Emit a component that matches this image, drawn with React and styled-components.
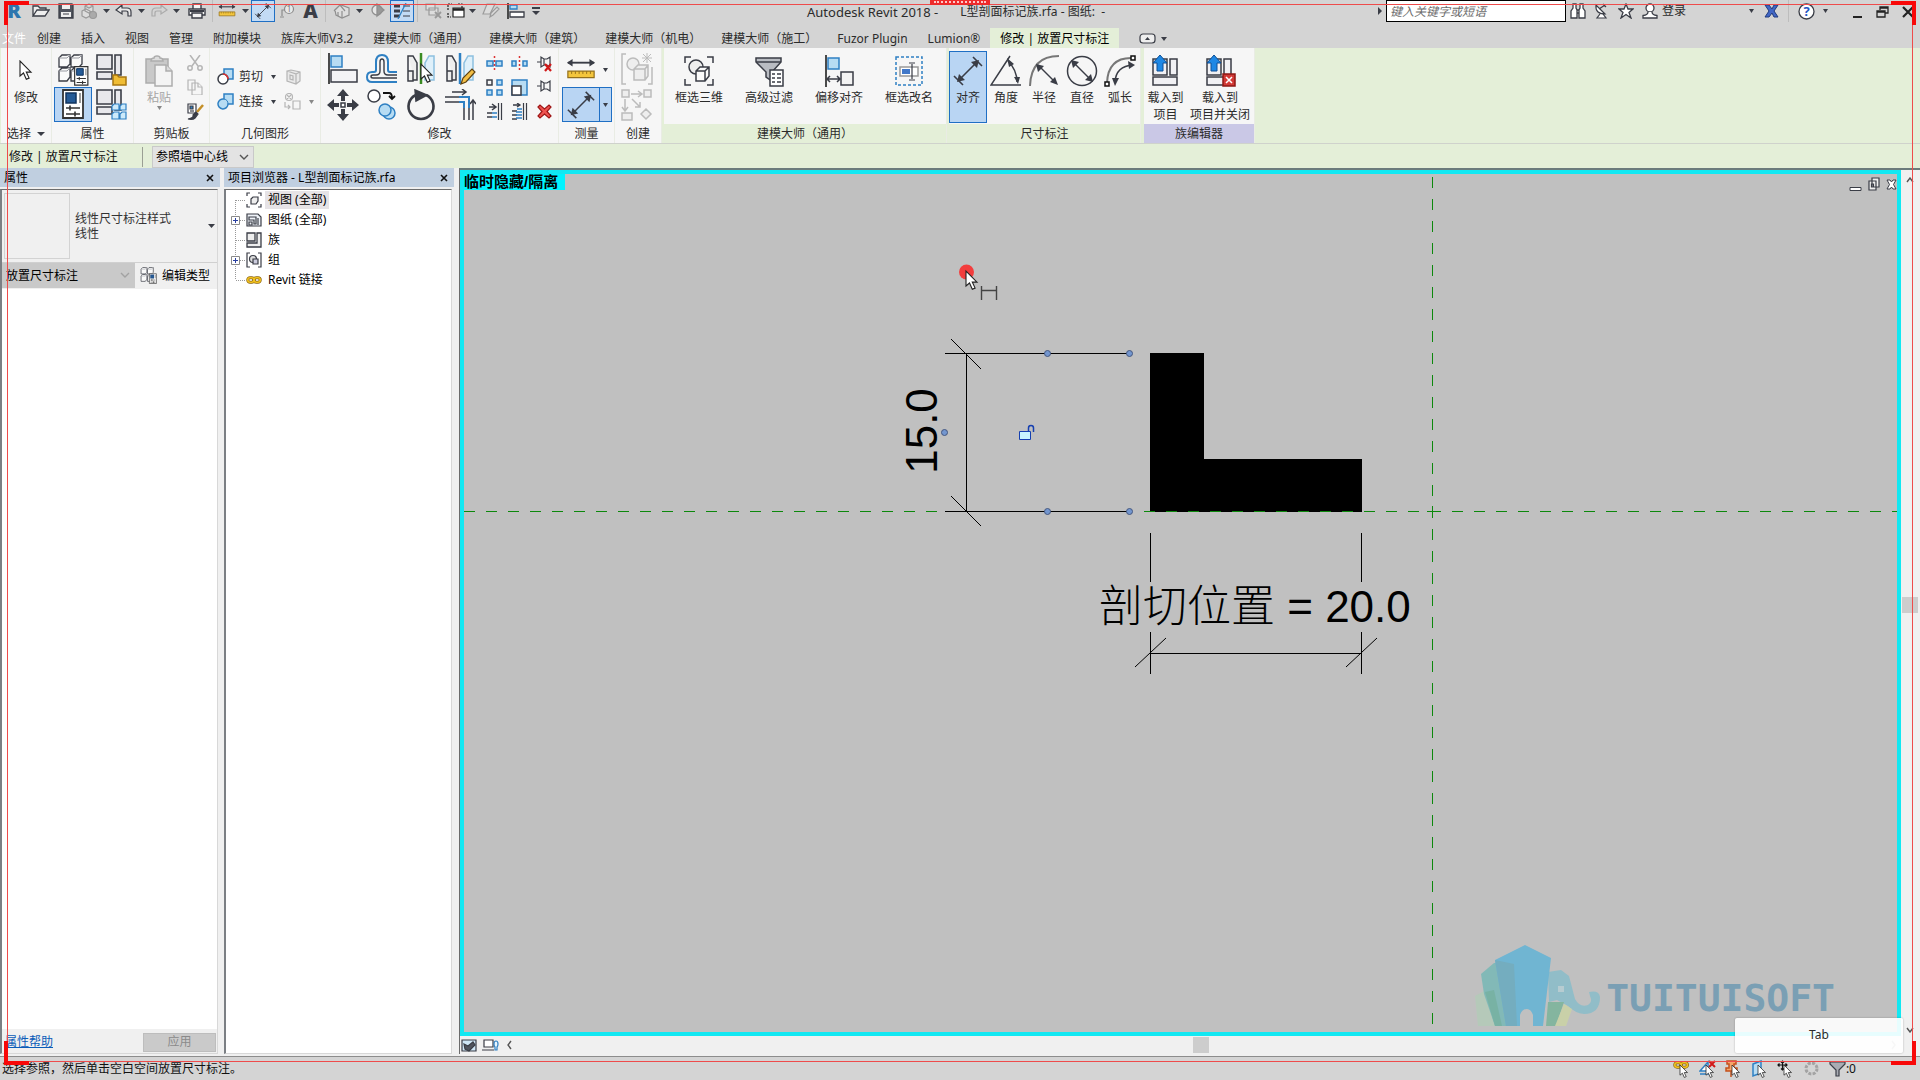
import React from 'react'
import styled, {createGlobalStyle, css} from 'styled-components'

const GlobalStyle = createGlobalStyle`
    *{
        box-sizing:border-box;
    }
    body{
        margin:0;
        overflow:hidden;
        background:#f0f0f0;
        color:#2b2b2b;
        font-family:"Noto Sans", "Noto Sans CJK SC", sans-serif;
        font-size:12px;
        line-height:16px;
    }
    button, input, select{
        font:inherit;
        color:inherit;
        margin:0;
        padding:0;
        border:0;
        background:none;
        border-radius:0;
    }
    svg{
        display:block;
        flex:none;
    }
`

const Window = styled.div`
    position:relative;
    display:flex;
    flex-direction:column;
    height:100vh;
`

/* ---------- title bar ---------- */

const TitleBar = styled.header`
    display:flex;
    align-items:flex-start;
    height:28px;
    background:#d4d4d4;
`

const QuickButton = styled.button`
    display:flex;
    align-items:center;
    justify-content:${p => p.$left ? 'flex-start' : 'center'};
    width:${p => p.$w}px;
    height:22px;
    ${p => p.$active && css`
        background:#c3dbf5;
        border:1px solid #1f6fc4;
    `}
`

const Toolbar = styled.div`
    display:flex;
    margin-right:${p => p.$gap || 0}px;
`

const Split = styled.span`
    width:${p => p.$w}px;
    height:22px;
    display:flex;
    justify-content:center;

    &::before{
        content:'';
        width:1px;
        background:#bdbdbd;
    }
`

const Title = styled.h1`
    flex:1;
    display:flex;
    justify-content:center;
    gap:22px;
    margin:0;
    padding-right:6px;
    font-size:12px;
    font-weight:400;
    line-height:24px;
    white-space:pre;
`

const AppName = styled.span`
    font-size:13px;
`

const SearchInput = styled.input`
    width:180px;
    height:22px;
    padding:0 3px;
    border:1px solid #000;
    background:#fff;
    font-style:italic;
    line-height:20px;

    &::placeholder{
        color:#6b6b6b;
        opacity:1;
    }
`

const WindowButton = styled.button`
    display:flex;
    align-items:center;
    justify-content:center;
    width:25px;
    height:24px;
`

/* ---------- tabs ---------- */

const Tabs = styled.nav`
    display:flex;
    height:20px;
    background:#d4d4d4;
    white-space:nowrap;
`

const Tab = styled.button`
    padding:1px 10px 0;
    line-height:20px;
    ${p => p.$file && css`
        padding:1px 1px 0 2px;
        color:#fff;
    `}
    ${p => p.$active && css`
        background:#e4efd8;
        color:#000;
    `}
`

/* ---------- ribbon ---------- */

const Ribbon = styled.div`
    display:flex;
    height:96px;
    padding-left:1px;
    background:#e4efd8;
    border-bottom:1px solid #cfd2cc;
`

const Panel = styled.section`
    display:flex;
    flex-direction:column;
    width:${p => p.$w}px;
    margin-right:${p => p.$gap || 0}px;
    background:#f6f6f6;
    border-right:1px solid #e9ece4;
`

const PanelBody = styled.div`
    flex:1;
    display:flex;
    padding:${p => p.$pad || '3px 0 0'};
    gap:${p => p.$gap || 0}px;
`

const PanelLabel = styled.h2`
    display:flex;
    align-items:center;
    justify-content:center;
    gap:6px;
    height:19px;
    margin:0;
    font-size:12px;
    font-weight:400;
    background:${p => p.$bg || 'transparent'};
`

const BigButton = styled.button`
    display:flex;
    flex-direction:column;
    align-items:center;
    width:${p => p.$w || 38}px;
    height:72px;
    padding-top:2px;
    line-height:17px;
    white-space:pre;
    color:${p => p.disabled ? '#a5a5a5' : '#2b2b2b'};
    ${p => p.$active && css`
        background:#b9d5f3;
        box-shadow:inset 0 0 0 1px #1f6fc4;
    `}
`

const IconBox = styled.span`
    display:flex;
    align-items:center;
    justify-content:center;
    width:32px;
    height:36px;
`

const IconGrid = styled.div`
    display:grid;
    grid-template-columns:repeat(${p => p.$cols}, ${p => p.$cell}px);
    grid-auto-rows:${p => p.$row}px;
    align-content:start;
`

const IconButton = styled.button`
    display:flex;
    align-items:center;
    justify-content:center;
    ${p => p.$active && css`
        background:#b9d5f3;
        border:1px solid #1f6fc4;
    `}
`

const TextButton = styled.button`
    display:flex;
    align-items:center;
    gap:5px;
    height:25px;

    & svg + svg{
        margin-left:3px;
    }
`

const GeometryGrid = styled.div`
    display:grid;
    grid-template-columns:64px 24px 12px;
    grid-auto-rows:25px;
    align-content:start;
    align-items:center;
`

const SplitButton = styled.div`
    display:flex;
    height:35px;
    width:50px;

    & button:first-child{
        width:38px;
    }
    & button:last-child{
        width:13px;
        margin-left:-1px;
    }
`

/* ---------- options bar ---------- */

const OptionsBar = styled.div`
    display:flex;
    align-items:center;
    height:24px;
    padding:2px 0 0 9px;
    background:#e4efd8;
    color:#111;
`

const OptionsTitle = styled.span`
    width:134px;
    height:20px;
    line-height:20px;
    margin-right:9px;
    border-right:1px solid #9a9f94;
`

const SelectBox = styled.div`
    display:grid;
    align-items:center;
    width:${p => p.$w}px;
    height:${p => p.$h}px;
    background:${p => p.$bg};
    border:1px solid ${p => p.$line};

    & select{
        grid-area:1 / 1;
        width:100%;
        height:100%;
        appearance:none;
        padding-left:3px;
        color:#000;
        opacity:1;
    }
    & svg{
        grid-area:1 / 1;
        justify-self:end;
        margin-right:4px;
        pointer-events:none;
    }
`

/* ---------- docked panels ---------- */

const Workspace = styled.main`
    flex:1;
    display:flex;
    min-height:0;
    border-bottom:1px solid #8c8c8c;
    padding-bottom:2px;
`

const Dock = styled.aside`
    display:flex;
    flex-direction:column;
    flex:none;
    width:${p => p.$w}px;
    margin-right:${p => p.$gap}px;
    color:#000;
`

const DockTitle = styled.div`
    display:flex;
    align-items:center;
    justify-content:space-between;
    height:19px;
    padding:0 6px 0 4px;
    background:#c0cfe0;
    margin-bottom:2px;
`

const DockBody = styled.div`
    flex:1;
    display:flex;
    flex-direction:column;
    margin-right:2px;
    border:1px solid #d8d8d8;
    border-top:1px solid #6d6d6d;
    border-left:2px solid #7b7f84;
    background:#fff;
`

const TypeSelector = styled.button`
    display:flex;
    align-items:center;
    height:73px;
    padding:0 2px;
    gap:5px;
    background:#f0f0f0;
    border-bottom:1px solid #d0d0d0;
    text-align:left;
    line-height:15px;
    color:#333;
`

const Preview = styled.span`
    width:66px;
    height:66px;
    border:1px solid #d3d3d3;
`

const TypeText = styled.span`
    flex:1;
`

const TypeRow = styled.div`
    display:flex;
    gap:5px;
    height:26px;
    background:#f0f0f0;
`

const PropsFooter = styled.div`
    display:flex;
    align-items:center;
    justify-content:space-between;
    height:24px;
    margin-top:auto;
    padding:2px 1px 0 3px;
    background:#f0f0f0;

    & a{
        color:#0a5cb8;
    }
`

const ApplyButton = styled.button`
    width:73px;
    height:19px;
    background:#cacaca;
    border:1px solid #bdbdbd;
    color:#8a8a8a;
`

const Tree = styled.ul`
    list-style:none;
    margin:0;
    padding:0 0 0 3px;
`

const TreeItem = styled.li`
    display:flex;
    align-items:center;
    height:20px;

    & > span{
        padding:0 3px;
        margin-left:3px;
        line-height:18px;
        background:${p => p.$selected ? '#e6e3e6' : 'transparent'};
    }
`

/* ---------- drawing view ---------- */

const View = styled.section`
    flex:1;
    display:grid;
    grid-template-columns:1fr 19px;
    grid-template-rows:1fr 18px;
    border-top:2px solid #6b7b7b;
    border-left:1px solid #6b6b6b;
    min-width:0;
`

const Canvas = styled.div`
    position:relative;
    border:4px solid #12e8f2;
    background:#c0c0c0;
    overflow:hidden;
`

const IsolateTag = styled.div`
    position:absolute;
    left:0;
    top:0;
    width:101px;
    height:16px;
    line-height:15px;
    color:#000;
    font-size:15px;
    font-weight:700;
    font-family:"Liberation Sans", "Noto Sans CJK SC", sans-serif;
    white-space:nowrap;
    background:#00f4ff;
`

const ViewButtons = styled.div`
    position:absolute;
    right:0;
    top:3px;
    display:flex;
    gap:6px;
`

const Watermark = styled.div`
    position:absolute;
    right:62px;
    bottom:5px;
    display:flex;
    align-items:flex-end;
    gap:3px;
    color:#7a9fb4;
    font:700 38px/58px "DejaVu Sans Mono", monospace;
`

const VScroll = styled.div`
    display:flex;
    flex-direction:column;
    align-items:center;
    justify-content:space-between;
    padding:7px 2px 3px 0;
    background:#f0f0f0;
`

const HScroll = styled.div`
    display:flex;
    align-items:center;
    gap:5px;
    padding:0 4px 0 1px;
    background:#f0f0f0;
`

const Track = styled.div`
    flex:1;
    display:flex;
    justify-content:center;
    padding-right:12px;
`

const Thumb = styled.span`
    width:16px;
    height:16px;
    background:#cdcdcd;
`

const KeyHint = styled.div`
    position:absolute;
    right:17px;
    bottom:27px;
    width:168px;
    height:35px;
    line-height:34px;
    text-align:center;
    border-radius:2px;
    background:rgba(255,255,255,.9);
    box-shadow:0 0 2px rgba(0,0,0,.3);
`

/* ---------- status bar ---------- */

const StatusBar = styled.footer`
    display:flex;
    align-items:center;
    justify-content:space-between;
    height:23px;
    padding:0 64px 0 2px;
    background:#d4d4d4;
    color:#111;
`

const StatusTools = styled.div`
    display:flex;
    align-items:center;
    gap:9px;
`

const StatusButton = styled.button`
    display:flex;
    align-items:center;
    height:18px;
`

/* ---------- recorder frame ---------- */

const Frame = styled.div`
    position:absolute;
    inset:4px 7px 18px 7px;
    border:1px solid #ee4b4b;
    pointer-events:none;
`

const Corner = styled.span`
    position:absolute;
    width:25px;
    height:24px;
    border:0 solid #f80808;
    ${p => p.$v}:-4px;
    ${p => p.$h}:-4px;
    border-${p => p.$v}-width:4px;
    border-${p => p.$h}-width:4px;
`

const Handle = styled.span`
    position:absolute;
    left:50%;
    top:-5px;
    width:60px;
    height:5px;
    margin-left:-30px;
    background:#ee2b2b;

    &::after{
        content:'';
        display:block;
        margin:1px 4px;
        border-top:2px dotted #ffc8c8;
    }
`

/* ---------- icons ---------- */

const D = '#3a3d46'
const B = '#2f80c3'
const L = '#b7dcf3'
const G = '#b5b5b5'

const Icon = ({w = 32, h, stroke = D, fill = 'none', sw = 1.5, children}) => (
    <svg width={w} height={h || w} viewBox={`0 0 ${w} ${h || w}`} fill={fill} stroke={stroke} strokeWidth={sw} aria-hidden="true">{children}</svg>
)

const Glyph = styled.span`
    font-family:"Open Sans", "Noto Sans", sans-serif;
    font-size:${p => p.$size}px;
    font-weight:800;
    line-height:20px;
    color:${p => p.$color};
`

const Caret = ({c = D, s = 7}) => <Icon w={s} h={4} stroke="none"><path d={`M0 0H${s}L${s / 2} 4z`} fill={c}/></Icon>
const Chevron = ({d = 'M1 1l4 4 4-4', c = '#555', w = 10, h = 7}) => <Icon w={w} h={h} stroke={c} sw={1.4}><path d={d}/></Icon>
const Cross = ({s = 9, c = '#111', sw = 1.6}) => <Icon w={s} stroke={c} sw={sw}><path d={`M1 1L${s - 1} ${s - 1}M${s - 1} 1L1 ${s - 1}`}/></Icon>
const Pointer = ({x = 0, y = 0, k = 1, fill = '#fff'}) => <path transform={`translate(${x} ${y}) scale(${k})`} d="M0 0v15l3.5-3 2.8 6.3 2.8-1.2-2.8-6H11z" fill={fill} stroke="#222" strokeWidth="1.1"/>

const RevitLogo = () => <Glyph $size={20} $color="#2d76ae">R</Glyph>
const OpenIcon = () => <Icon w={18} h={14} sw={1.3} fill="#eee"><path d="M1 12V2h5l2 2h6v2M1 12L5 6h12l-4 6z"/></Icon>
const SaveIcon = () => <Icon w={16} sw={1.3}><path d="M1 1h13l1 1v13H1z" fill="#50545e"/><path d="M4 1h8v5H4zM3 9h10v5H3z" fill="#eee" stroke="none"/><path d="M5 11h6" strokeWidth="1"/></Icon>
const SyncIcon = () => <Icon w={17} stroke="#999" sw={1.2} fill="#ddd"><path d="M4 3l4-2 4 2v5l-4 2-4-2zM1 8l4-2 4 2v5l-4 2-4-2zM4 3l4 2 4-2"/><circle cx="12" cy="12" r="3.500" fill="#aaa"/></Icon>
const UndoIcon = () => <Icon w={18} h={14} sw={1.2} fill="#e8e8e8"><path d="M1 6l6-5v3h5q4 0 4 4v4h-3V9q0-2-2-2H7v3z"/></Icon>
const RedoIcon = () => <Icon w={18} h={14} stroke="#aaa" sw={1.2}><path d="M17 6l-6-5v3H6q-4 0-4 4v4h3V9q0-2 2-2h4v3z"/></Icon>
const PrintIcon = () => <Icon w={18} h={16} sw={1.4} fill="#f4f4f4"><path d="M5 6V1h8v5"/><path d="M1 6h16v6H1z"/><path d="M2 8h14" strokeWidth="2"/><path d="M4 10h10v5H4z"/></Icon>
const MeasureIcon = ({w = 32}) => (
    <svg width={w} height={w * 24 / 32} viewBox="0 0 32 24" fill="none" stroke={D} strokeWidth="2" aria-hidden="true">
        <path d="M2 5h28"/><path d="M1 5l6-4v8zM31 5l-6-4v8z" fill={D} stroke="none"/>
        <path d="M2 14h28v7H2z" fill="#f4c63d" stroke="#94701b" strokeWidth="1.300"/>
        <path d="M6 14v3M10 14v3M14 14v3M18 14v3M22 14v3M26 14v3" stroke="#94701b" strokeWidth="1"/>
    </svg>
)
const DimIcon = ({w = 32}) => (
    <svg width={w} height={w} viewBox="0 0 32 32" fill="none" stroke={D} strokeWidth="1.600" aria-hidden="true">
        <path d="M7 25L25 7M2 21l9 9M21 2l9 9"/>
        <path d="M5 27l2-8 6 6zM27 5l-8 2 6 6z" fill={D} stroke="none"/>
    </svg>
)
const TagIcon = () => (
    <Icon w={16} stroke="#8b8b8b" sw={1.2}>
        <circle cx="10" cy="6" r="4.500" fill="#e9e9e9"/><path d="M6 7H3v6M1 14h4"/>
        <text x="10" y="9" textAnchor="middle" fontSize="8" fill="#777" stroke="none">1</text>
    </Icon>
)
const LetterA = () => <Glyph $size={20} $color={D}>A</Glyph>
const HomeIcon = () => <Icon w={18} h={16} stroke="#8f8f8f" sw={1.2} fill="#dedede"><path d="M2 7l6-5 8 3v7l-7 3-6-3z"/><path d="M1 8l6-6 5 6M9 8v7M5 9v4"/></Icon>
const SectionIcon = () => <Icon w={14} h={16} stroke="#8f8f8f" sw={1.3} fill="#e5e5e5"><circle cx="6" cy="7" r="5"/><path d="M6 1l7 6-7 6z" fill="#999"/></Icon>
const ThinLines = () => <Icon w={18} h={16}><path d="M1 3h6M1 8h6M1 13h6" strokeWidth="3"/><path d="M10 3h7M10 8h7M10 13h7" strokeWidth="1"/><path d="M13 0L5 16" stroke={B} strokeWidth="1.300"/></Icon>
const CloseHidden = () => <Icon w={17} stroke="#999" sw={1.2}><path d="M1 1h9v6H1zM4 5h9v7H4z" fill="#ddd"/><path d="M10 9l6 6M16 9l-6 6" strokeWidth="1.800"/></Icon>
const SwitchWin = () => <Icon w={18} h={16} sw={1.2} stroke="#222" fill="#fff"><path d="M1 7V1h4M15 5V1h-4M1 10v4h3" fill="none" strokeDasharray="2 1"/><path d="M6 5h11v9H6z"/><path d="M6 6.500h11" strokeWidth="2.500"/></Icon>
const SketchIcon = () => <Icon w={18} h={16} stroke="#9b9b9b" sw={1.2}><path d="M5 1h8L8 11H1zM8 14l1-4 6-6 2 2-6 6z" fill="#dcdcdc"/></Icon>
const AlignMini = () => <Icon w={18} h={16} sw={1.3}><path d="M1 0v16" stroke="#000"/><path d="M3 2h7v4H3z" fill={L} stroke={B}/><path d="M3 9h14v5H3z" fill="#fff"/></Icon>
const MenuCaret = () => <Icon w={8} h={8} stroke="none" fill={D}><path d="M0 0h8v2H0zM0 4h8L4 8z"/></Icon>

const quickTools = [
    ['Revit', 28, RevitLogo], ['打开', 26, OpenIcon], ['保存', 23, SaveIcon], ['同步', 24, SyncIcon], ['同步选项', 11, Caret],
    ['放弃', 23, UndoIcon], ['放弃列表', 13, Caret], ['重做', 22, RedoIcon], ['重做列表', 13, Caret], ['打印', 27, PrintIcon], ['', 4],
    ['测量', 26, () => <MeasureIcon w={18}/>], ['测量选项', 11, Caret], ['对齐尺寸标注', 24, () => <DimIcon w={18}/>, true],
    ['按类别标记', 24, TagIcon], ['文字', 23, LetterA], ['', 7], ['默认三维视图', 25, HomeIcon], ['三维选项', 11, Caret],
    ['剖面', 25, SectionIcon], ['细线', 24, ThinLines, true], ['', 7], ['关闭隐藏窗口', 24, CloseHidden], ['切换窗口', 22, SwitchWin],
    ['窗口列表', 11, Caret], ['编辑草图', 26, SketchIcon], ['对齐', 24, AlignMini], ['自定义快速访问工具栏', 16, MenuCaret]
]

const Binoculars = () => <Icon w={16} sw={1.3} fill="#fff"><path d="M3 1h3v4l1 2v8H1V8l2-3zM10 1h3v4l2 3v7H9V7l1-2zM7 7h2v3H7z"/></Icon>
const Satellite = () => <Icon w={15} h={16} sw={1.2} fill="#fff"><path d="M2 2q-1 9 9 9zM5 6l6-4M6 11l-3 4h9l-3-4M9 1l3 3"/></Icon>
const Star = () => <Icon w={16} sw={1.3} fill="#fff"><path d="M8 1l2 5h5l-4 3.500 2 5.500-5-3.500L3 15l2-5.500L1 6h5z"/></Icon>
const UserIcon = () => <Icon w={16} sw={1.3} fill="#fff"><circle cx="8" cy="5" r="4"/><path d="M6 9q0 3-5 3.500V15h14v-2.500Q10 12 10 9"/></Icon>
const ExchangeIcon = () => <Icon w={15} h={14} stroke="#203a7d" sw={1} fill="#4267c6"><path d="M1 1h4l3 4 2-4h4l-4 6 4 6h-4L8 9l-3 4H1l4-6z"/></Icon>
const HelpIcon = () => (
    <Icon w={17} sw={1.3}>
        <circle cx="8.500" cy="8.500" r="7.500" fill="#fff"/>
        <text x="8.500" y="13" textAnchor="middle" fontSize="13" fontWeight="700" fill="#2456c4" stroke="none">?</text>
    </Icon>
)

const accountTools = [
    ['搜索', 24, Binoculars], ['通信中心', 23, Satellite], ['收藏夹', 25, Star], ['用户', 24, UserIcon], ['登录', 82, () => '登录'],
    ['登录选项', 14, () => <Caret s={5}/>], ['应用程序商店', 26, ExchangeIcon], ['', 9], ['帮助', 27, HelpIcon], ['帮助选项', 10, () => <Caret s={5}/>]
]

/* ribbon pictures */

const Cubes = () => (
    <g fill="#fafafa" stroke={D} strokeWidth="1.300">
        <path d="M2 4l3-3h8v9l-3 3H2zM14 4l3-3h8v9l-3 3h-8zM2 17l3-3h8v9l-3 4H2zM14 17l3-3h8v9l-3 4h-8z"/>
        <path d="M2 4h8l3-3M14 4h8l3-3M2 17h8l3-3M14 17h8l3-3" stroke="#9a9ca3" strokeWidth="1"/>
    </g>
)
const PropSheet = ({x = 0, y = 0, k = 1}) => (
    <g transform={`translate(${x} ${y}) scale(${k})`}>
        <path d="M1 1h20v28H1z" fill="#fff" stroke="#333" strokeWidth="1.800"/>
        <path d="M4 4h10v10H4z" fill="#245a96" stroke="#12355f"/>
        <path d="M17 4h2v10h-2z" fill="#999" stroke="none"/>
        <path d="M4 19h14M4 25h14M8 16.500v5M13 22.500v5" stroke="#333" strokeWidth="1.600"/>
    </g>
)
const Blocks = () => <g fill="#e8e8ec" strokeWidth="1.600"><path d="M2 1h15v14H2zM20 1h6v20h-6zM2 18h15v7H2z"/></g>
const TypeProps = () => <Icon><Cubes/><PropSheet x={17} y={12} k={0.66}/></Icon>
const FamilyTypes = () => <Icon><Blocks/><path d="M18 21h4l2 2h7v8H18z" fill="#f0bd35" stroke="#a87710"/></Icon>
const PropsIcon = () => <Icon w={24} h={31}><PropSheet x={1}/></Icon>
const FamilyCat = () => <Icon><Blocks/><g fill="#cdeafa" stroke={B} strokeWidth="1.200"><path d="M17 17l2-2h5v6h-7zM25 17l2-2h4v6h-6zM17 25l2-2h5v7h-7zM25 25l2-2h4v7h-6z"/></g></Icon>
const PasteIcon = () => <Icon w={28} h={32} stroke="#adadad" fill="#ddd"><path d="M1 4h22v24H1z" fill="#c9c9c9"/><path d="M6 6q0-3 3-3 0-2 3-2t3 2q3 0 3 3z"/><path d="M10 10h11l6 6v15H10z" fill="#f4f4f4"/><path d="M21 10v6h6"/></Icon>
const CutIcon = () => <Icon w={16} stroke={G}><path d="M3 0l8 11M13 0L5 11"/><circle cx="3" cy="13" r="2.200"/><circle cx="13" cy="13" r="2.200"/></Icon>
const CopyIcon = () => <Icon w={16} stroke={G} fill="#f6f6f6" sw={1.200}><path d="M1 1h7v10H1zM5 4h6l4 4v8H5z"/><path d="M11 4v4h4"/></Icon>
const MatchIcon = () => <Icon w={17} sw={1.200}><path d="M1 1h8v9H1z" fill="#fff"/><path d="M3 3h3v3H3z" fill={B}/><path d="M3 8h4"/><path d="M16 2l-6 7" stroke="#c48f27" strokeWidth="2.500"/><path d="M1 16q6-1 5-4l3-3 2 2-3 4q-2 2-7 1z" fill={D}/></Icon>
const CutGeo = () => <Icon w={17}><path d="M7 1h9v10H7z" fill={L} stroke={B}/><circle cx="6" cy="11" r="5" fill="#fff"/><path d="M6 6a5 5 0 0 1 5 5" stroke="#d33"/></Icon>
const JoinGeo = () => <Icon w={17} stroke={B} fill={L}><path d="M7 1h9v10h-5a5 5 0 1 1-4-5z"/><path d="M7 6a5 5 0 0 1 4 5" strokeWidth="1"/></Icon>
const GeoA = () => <Icon w={16} stroke={G} fill="#e9e9e9" sw={1.200}><path d="M2 2l4-1 9 2v9l-4 3-9-3zM2 2l9 3v10M11 5l4-2"/><path d="M5 6l3 1v4l-3-1z"/></Icon>
const GeoB = () => <Icon w={18} stroke={G} sw={1.200}><circle cx="5" cy="4" r="3.500"/><path d="M3 2l4 4M7 2L3 6M1 9v5h5M4 12l2 2-2 2M9 8h7v8H9z"/></Icon>

const AlignIcon = () => <Icon><path d="M2 0v31" stroke="#111"/><path d="M4 3h11v11H4z" fill={L} stroke={B}/><path d="M4 17h26v12H4z" fill="#f3f3f6"/></Icon>
const OffsetIcon = () => (
    <Icon sw={2}>
        <path d="M31 29H6q-5 0-5-5t5-5h2q2 0 2-2v-8q0-7 6-7t6 7v8q0 2 2 2h7" stroke={B}/>
        <path d="M31 25H7q-2 0-2-1.500T7 22h3q4 0 4-4V9q0-3 2-3t2 3v9q0 4 4 4h9" strokeWidth="1.400"/>
    </Icon>
)
const MirrorBase = ({line}) => <g><path d="M3 3h5l4 7v17h-4V18H3zM3 3v25h5v-9" fill="#eee"/><path d="M29 3h-5l-4 7v17h9z" fill="#dff0fa" stroke="#8dc0e0"/><path d="M16 0v31" stroke={line} strokeWidth="2.500"/></g>
const MirrorPick = () => <Icon><MirrorBase line="#3a8b22"/><Pointer x={16} y={11}/></Icon>
const MirrorDraw = () => <Icon><MirrorBase line={B}/><path d="M17 31l2-6 9-9 3 3-9 10z" fill="#f3bf45" stroke="#5f4211" strokeWidth="1.200"/></Icon>
const MoveIcon = () => <Icon stroke="none" fill={D}><path d="M16 0l6 7h-4v5h-4V7h-4zM16 32l6-7h-4v-5h-4v5h-4zM0 16l7-6v4h5v4H7v4zM32 16l-7-6v4h-5v4h5v4z"/><path d="M14 14h4v4h-4z" fill="#fff" stroke={D}/></Icon>
const CopyTool = () => <Icon><circle cx="8" cy="7" r="6" fill="#fff"/><path d="M17 4h6q3 0 3 5M23 7l3 3 3-3" stroke="#111" strokeWidth="1.800"/><g fill={L} stroke={B}><circle cx="23" cy="24" r="6"/><circle cx="19" cy="21" r="6"/></g></Icon>
const RotateIcon = () => <Icon><path d="M21 6a12.500 12.500 0 1 1-10 0" strokeWidth="2.600"/><path d="M10 1l12 5-11 6z" fill={D}/></Icon>
const TrimIcon = () => <Icon><path d="M8 3h13M18 0l4 3-4 3M29 31V12M26 15l3-4 3 4"/><path d="M1 8h14M1 13h14M20 19v12M25 19v12"/><path d="M15 8h10v11M15 13h5v6" stroke={B} strokeWidth="2"/></Icon>
const SplitEl = ({gap}) => <Icon w={17} stroke={B} fill={L}><path d={gap ? 'M1 6h4v5H1zM12 6h4v5h-4z' : 'M1 6h6v5H1zM10 6h6v5h-6z'}/><path d="M8.500 1v15" stroke="#d33" strokeDasharray="2 2"/></Icon>
const PinIcon = ({x}) => <Icon w={17} sw={1.200}><path d="M1 7h4M5 2v10l3-2h3l3 2V2l-3 2H8zM8 4v6"/>{x && <path d="M9 9l6 7M15 9l-6 7" stroke="#d01818" strokeWidth="2.200"/>}</Icon>
const ArrayIcon = () => <Icon w={17}><path d="M1 1h5v5H1z"/><path d="M1 11h5v5H1zM11 1h5v5h-5zM11 11h5v5h-5z" fill={L} stroke={B}/></Icon>
const ScaleIcon = () => <Icon w={17} fill={L} stroke={B}><path d="M1 1h15v15H1z"/><path d="M1 7h9v9H1z" fill="#fff" stroke={D}/></Icon>
const TrimOne = () => <Icon w={17}><path d="M3 4h6M6 1l4 3-4 3"/><path d="M1 10h5M1 14h5"/><path d="M6 10h5M6 14h5" stroke={B}/><path d="M12.500 0v17M15.500 0v17" strokeWidth="1.200"/></Icon>
const TrimMany = () => <Icon w={17}><path d="M2 2h7M6 0l3 2-3 2M1 8h5M1 12h5M1 16h5" strokeWidth="1.300"/><path d="M6 6h5M5 9h6M5 12h6M5 15h6" stroke={B} strokeWidth="1.600"/><path d="M12.500 0v17M15.500 0v17" strokeWidth="1.200"/></Icon>
const DeleteIcon = () => <Icon w={15} stroke="#9d1414" sw={1.200}><path d="M1 3l2-2 4.500 4L12 1l2 2-4 4.500 4 4.500-2 2-4.500-4L3 14l-2-2 4-4.500z" fill="#ef5350"/></Icon>
const CreateA = () => <Icon stroke="#bcbcbc"><path d="M5 1H1v30h4M27 31h4V14"/><circle cx="12" cy="11" r="6" fill="#eee"/><path d="M13 16l4-4h10v11l-3 4H13zM13 16h11v11M24 16l3-4" fill="#eee"/><path d="M26 0v10M21 5h10M22 1l8 8M30 1l-8 8" strokeWidth="1"/></Icon>
const CreateB = () => <Icon stroke="#bcbcbc" fill="#eee"><path d="M1 1h7v7H1zM23 1h7v7h-7zM1 24h10v7H1zM25 20l5 5-5 5-5-5z"/><path d="M10 5h10M17 2l4 3-4 3M4 10v11M1 18l3 4 3-4M11 10l8 8M19 13v5h-5" fill="none"/></Icon>

const BoxSelect = () => <Icon><path d="M2 8V2h6M24 2h6v6M30 24v6h-6M8 30H2v-6"/><circle cx="13" cy="12" r="7" fill="#eee"/><path d="M13 16l4-4h9v9l-4 5h-9zM13 16h9v10M22 16l4-4" fill="#fafafa"/></Icon>
const FilterIcon = () => <Icon><path d="M3 3h25v4l-9 10v9l-6-4v-5L3 7z" fill="#b9bcc2"/><path d="M3 7h25"/><path d="M17 15h13v16H17z" fill="#fff"/><path d="M19 19h3M24 19h4M19 23h3M24 23h4M19 27h3M24 27h4"/></Icon>
const OffsetAlign = () => <Icon><path d="M3 0v32" stroke="#111"/><path d="M5 3h11v11H5z" fill={L} stroke={B}/><path d="M18 17h12v13H18z" fill="#f3f3f3"/><path d="M4 24h13M7 21l-3 3 3 3M14 21l3 3-3 3"/></Icon>
const RenameIcon = () => <Icon><path d="M3 2h26v28H3z" stroke={B} strokeDasharray="3 2"/><path d="M7 12h18v9H7z" fill="#fff" stroke="#999"/><path d="M9 14h8v5H9z" fill="#4178c9" stroke="none"/><path d="M19 9v15M16 8h6M16 25h6" strokeWidth="1.200"/></Icon>
const AngleIcon = () => <Icon><path d="M20 1L1 30h30"/><path d="M18 6q9 9 9 21" /><path d="M17 3l7 6-5 3zM24 22h6l-2 7z" fill={D} stroke="none"/></Icon>
const RadiusIcon = () => <Icon><path d="M31 1Q3 1 2 31" stroke="#777" strokeWidth="2"/><path d="M10 10l17 17"/><path d="M8 9l8 2-6 6zM30 30l-8-3 5-5z" fill={D} stroke="none"/></Icon>
const DiameterIcon = () => <Icon><circle cx="16" cy="16" r="14.500"/><path d="M7 7l18 18"/><path d="M5 5l8 2-6 6zM27 27l-8-2 6-6z" fill={D} stroke="none"/></Icon>
const ArcIcon = () => <Icon><path d="M27 3Q4 3 3 28" stroke="#777" strokeWidth="2"/><path d="M29 10q-17 1-18 17"/><path d="M24 6l7 4-6 4zM8 23h7l-4 8z" fill={D} stroke="none"/><path d="M27 1h4v4h-4zM1 27h4v4H1z" fill="#fff" stroke="#111"/></Icon>
const LoadIcon = ({close}) => (
    <Icon>
        <path d="M3 4h14v16H3zM20 4h7v16h-7zM3 22h24v8H3z" fill="#f1f1f4"/>
        <path d="M10 0l7 8h-4v8H7V8H3z" fill="#1e88e5" stroke="#0e4f94" strokeWidth="1"/>
        {close && <g><path d="M19 19h12v12H19z" fill="#d33a36" stroke="#8f1815"/><path d="M22 22l6 6M28 22l-6 6" stroke="#fff"/></g>}
    </Icon>
)

const tabs = ['创建', '插入', '视图', '管理', '附加模块', '族库大师V3.2', '建模大师（通用）', '建模大师（建筑）', '建模大师（机电）', '建模大师（施工）', 'Fuzor Plugin', 'Lumion®']

const modifyTools = [
    ['对齐', AlignIcon], ['偏移', OffsetIcon], ['镜像-拾取轴', MirrorPick], ['镜像-绘制轴', MirrorDraw],
    ['移动', MoveIcon], ['复制', CopyTool], ['旋转', RotateIcon], ['修剪/延伸为角', TrimIcon]
]

const modifySmall = [
    ['拆分图元', SplitEl], ['用间隙拆分', () => <SplitEl gap/>], ['解锁', () => <PinIcon x/>],
    ['阵列', ArrayIcon], ['缩放', ScaleIcon], ['锁定', PinIcon],
    ['修剪单个图元', TrimOne], ['修剪多个图元', TrimMany], ['删除', DeleteIcon]
]

const masterTools = [['框选三维', BoxSelect], ['高级过滤', FilterIcon], ['偏移对齐', OffsetAlign], ['框选改名', RenameIcon]]
const dimTools = [['对齐', DimIcon], ['角度', AngleIcon], ['半径', RadiusIcon], ['直径', DiameterIcon], ['弧长', ArcIcon]]

const RibbonBar = () => (
    <Ribbon>
        <Panel $w={51}>
            <PanelBody><BigButton $w={50}><IconBox><Icon w={14} h={22}><Pointer x={1} y={1}/></Icon></IconBox>修改</BigButton></PanelBody>
            <PanelLabel>选择 <Caret s={8}/></PanelLabel>
        </Panel>
        <Panel $w={82}>
            <PanelBody $pad="4px 0 0 2px">
                <IconGrid $cols={2} $cell={38} $row={35}>
                    <IconButton aria-label="类型属性"><TypeProps/></IconButton>
                    <IconButton aria-label="族类型"><FamilyTypes/></IconButton>
                    <IconButton aria-label="属性" $active><PropsIcon/></IconButton>
                    <IconButton aria-label="族类别"><FamilyCat/></IconButton>
                </IconGrid>
            </PanelBody>
            <PanelLabel>属性</PanelLabel>
        </Panel>
        <Panel $w={76}>
            <PanelBody $pad="3px 0 0 3px">
                <BigButton $w={44} disabled><IconBox><PasteIcon/></IconBox>粘贴<Caret s={5} c="#888"/></BigButton>
                <IconGrid $cols={1} $cell={28} $row={24}>
                    <IconButton aria-label="剪切到剪贴板"><CutIcon/></IconButton>
                    <IconButton aria-label="复制到剪贴板"><CopyIcon/></IconButton>
                    <IconButton aria-label="匹配类型"><MatchIcon/></IconButton>
                </IconGrid>
            </PanelBody>
            <PanelLabel>剪贴板</PanelLabel>
        </Panel>
        <Panel $w={111}>
            <PanelBody $pad="16px 0 0 7px">
                <GeometryGrid>
                    <TextButton><CutGeo/>剪切 <Caret s={5}/></TextButton>
                    <IconButton aria-label="拆分面"><GeoA/></IconButton>
                    <span/>
                    <TextButton><JoinGeo/>连接 <Caret s={5}/></TextButton>
                    <IconButton aria-label="填色"><GeoB/></IconButton>
                    <IconButton aria-label="填色选项"><Caret s={5} c="#888"/></IconButton>
                </GeometryGrid>
            </PanelBody>
            <PanelLabel>几何图形</PanelLabel>
        </Panel>
        <Panel $w={238}>
            <PanelBody $pad="3px 0 0 2px" $gap={3}>
                <IconGrid $cols={4} $cell={39} $row={36}>
                    {modifyTools.map(([name, Pic]) => <IconButton key={name} aria-label={name}><Pic/></IconButton>)}
                </IconGrid>
                <IconGrid $cols={3} $cell={25} $row={24}>
                    {modifySmall.map(([name, Pic]) => <IconButton key={name} aria-label={name}><Pic/></IconButton>)}
                </IconGrid>
            </PanelBody>
            <PanelLabel>修改</PanelLabel>
        </Panel>
        <Panel $w={56}>
            <PanelBody $pad="4px 0 0 3px">
                <div>
                    <SplitButton>
                        <IconButton aria-label="测量"><MeasureIcon w={30}/></IconButton>
                        <IconButton aria-label="测量选项"><Caret s={5}/></IconButton>
                    </SplitButton>
                    <SplitButton>
                        <IconButton $active aria-label="尺寸标注"><DimIcon w={30}/></IconButton>
                        <IconButton $active aria-label="尺寸标注选项"><Caret s={5}/></IconButton>
                    </SplitButton>
                </div>
            </PanelBody>
            <PanelLabel>测量</PanelLabel>
        </Panel>
        <Panel $w={47} $gap={2}>
            <PanelBody $pad="3px 0 0 2px">
                <IconGrid $cols={1} $cell={40} $row={36}>
                    <IconButton aria-label="创建组"><CreateA/></IconButton>
                    <IconButton aria-label="创建类似"><CreateB/></IconButton>
                </IconGrid>
            </PanelBody>
            <PanelLabel>创建</PanelLabel>
        </Panel>
        <Panel $w={283} $gap={2}>
            <PanelBody>
                {masterTools.map(([name, Pic]) => <BigButton key={name} $w={70}><IconBox><Pic/></IconBox>{name}</BigButton>)}
            </PanelBody>
            <PanelLabel $bg="#e4efd8">建模大师（通用）</PanelLabel>
        </Panel>
        <Panel $w={192} $gap={3}>
            <PanelBody>
                {dimTools.map(([name, Pic], i) => <BigButton key={name} $active={i === 0}><IconBox><Pic/></IconBox>{name}</BigButton>)}
            </PanelBody>
            <PanelLabel $bg="#e4efd8">尺寸标注</PanelLabel>
        </Panel>
        <Panel $w={111}>
            <PanelBody>
                <BigButton $w={43}><IconBox><LoadIcon/></IconBox>{'载入到\n项目'}</BigButton>
                <BigButton $w={66}><IconBox><LoadIcon close/></IconBox>{'载入到\n项目并关闭'}</BigButton>
            </PanelBody>
            <PanelLabel $bg="#cac8e6">族编辑器</PanelLabel>
        </Panel>
    </Ribbon>
)

/* project browser */

const TreeLines = ({plus, first, last}) => (
    <svg width="17" height="20" aria-hidden="true">
        <path d={`M6.5 ${first ? 10 : 0}V${last ? 10 : 20}M7 10.5h10`} stroke="#999" strokeDasharray="1 1" fill="none"/>
        {plus && <g><path d="M2.500 6.500h8v8h-8z" fill="#fff" stroke="#8a8a8a"/><path d="M4 10.500h5M6.500 8v5" stroke="#2a3fa0"/></g>}
    </svg>
)
const ViewsIcon = () => <Icon w={16} sw={1.200}><path d="M4 1H1v3M12 1h3v3M15 12v3h-3M4 15H1v-3"/><path d="M5 7l2-2h5v4l-2 3H5z" fill="#eee"/></Icon>
const SheetsIcon = () => <Icon w={16} sw={1.200}><path d="M1 2h11l3 3v9H1z" fill="#eef2f8"/><path d="M3 5h7v7H8V8H3zM3 10h3v3H3zM12 6v7"/></Icon>
const FamilyIcon = () => <Icon w={16} sw={1.300}><path d="M1 1h8v8H1zM11 1h4v14H1v-4h10z" fill="#eee"/></Icon>
const GroupIcon = () => <Icon w={16} sw={1.200}><path d="M4 1H1v14h3M12 1h3v14h-3"/><circle cx="7" cy="7" r="3.500" fill="#ddd"/><path d="M7 7h5v5H7z" fill="#ccd"/></Icon>
const Chain = () => <g fill="none" stroke="#8b6510" strokeWidth="3.400"><rect x="2" y="3" width="7" height="5" rx="2.500"/><rect x="9" y="3" width="7" height="5" rx="2.500"/><g stroke="#f2c21f" strokeWidth="1.800"><rect x="2" y="3" width="7" height="5" rx="2.500"/><rect x="9" y="3" width="7" height="5" rx="2.500"/></g></g>
const LinkIcon = () => <svg width="16" height="10" viewBox="0 0 18 11" aria-hidden="true"><Chain/></svg>

const browser = [
    ['视图 (全部)', ViewsIcon, false], ['图纸 (全部)', SheetsIcon, true], ['族', FamilyIcon, false], ['组', GroupIcon, true], ['Revit 链接', LinkIcon, false]
]

/* model drawing: the L section mark with its two dimensions */

const Model = styled.svg`
    position:absolute;
    left:0;
    top:0;
    overflow:visible;
    white-space:pre;
`

const grips = [[1047.5, 353.5], [1129.5, 353.5], [1047.5, 511.5], [1129.5, 511.5], [944.5, 432.5]]

const Drawing = () => (
    <Model width="1433" height="859" viewBox="464 174 1433 859" fill="none" stroke="#000" role="img" aria-label="L型剖面标记">
        <path d="M1150 353h54v106h158v53h-212z" fill="#000" stroke="none"/>
        <g stroke="#0c880c" strokeDasharray="11 11">
            <path d="M464 511.500h481M1144 511.500h2000"/>
            <path d="M1432.500 177v2000"/>
        </g>
        <path d="M1427 511.500h11M1432.500 506v11" stroke="#0c880c"/>
        <path d="M945 353.500h184M945 511.500h184M966.500 353v159M951 339l30 30M951 496l30 30"/>
        <path d="M1150.500 533v49M1361.500 533v49M1150.500 632v42M1361.500 632v42M1150 653.500h212M1135 667l31-29M1346 667l31-29"/>
        {grips.map(([x, y]) => <circle key={x + '-' + y} cx={x} cy={y} r="3" fill="#7396cf" stroke="#44577f"/>)}
        <path d="M1019.500 431.500h11v8h-11z" fill="#c8f4ff" stroke="#153fb0"/>
        <path d="M1028.500 431v-3q0-2.500 2.500-2.500t2.500 2.500v4" stroke="#153fb0" strokeWidth="1.500"/>
        <g fill="#000" stroke="none" fontFamily='"Liberation Sans", sans-serif' fontSize="44">
            <text transform="translate(937 431) rotate(-90)" textAnchor="middle">15.0</text>
            <text x="1099" y="622"><tspan fontFamily='"Noto Sans CJK SC", sans-serif' fontWeight="300">剖切位置</tspan> = 20.0</text>
        </g>
        <circle cx="966.500" cy="272" r="7.500" fill="#f23d3d" stroke="none"/>
        <Pointer x={966} y={271}/>
        <path d="M981.500 286v14M996.500 286v14M982 290.500h14" stroke="#444" strokeWidth="1.400"/>
    </Model>
)

const Elephant = () => (
    <svg width="128" height="83" viewBox="0 0 128 83" aria-hidden="true">
        <path d="M0 52l11-6 10 36H3z" fill="#b5c9b9"/>
        <path d="M6 30l13-11 22-1v64H20L9 50z" fill="#82b9b7"/>
        <path d="M10 48l9-2 8 36h-7z" fill="#78b2a4"/>
        <path d="M73 28l13-2 8 6 6 23q5 9 13 6 5-3 2-9l-1-4q10-2 11 5 0 17-16 17-9-1-16-8L82 56l-8 2z" fill="#91bdc8"/>
        <path d="M83 42h6v6h-6z" fill="#b7ccd1"/>
        <path d="M73 58h16l-8 24H71z" fill="#84b59f"/>
        <path d="M89 60l8 5-6 17H80z" fill="#c9d0a8"/>
        <path d="M20 16L50 1l26 13-8 68H58V71q-2-6-6-6-5 0-7 6v11H31z" fill="#70b5d2"/>
        <path d="M20 16l19 4 3 62H31z" fill="#74adbf"/>
    </svg>
)

const CursorIcon = ({children}) => <Icon w={17} h={18}>{children}<Pointer x={7} y={5} k={0.68}/></Icon>

const statusTools = [
    ['选择链接', () => <CursorIcon><g transform="scale(.9)"><Chain/></g></CursorIcon>],
    ['选择基线图元', () => <CursorIcon><path d="M1 11L9 2v9zM1 14h11" stroke={B} fill="#fff"/><path d="M10 1l6 6M16 1l-6 6" stroke="#d01818" strokeWidth="2"/></CursorIcon>],
    ['选择锁定图元', () => <CursorIcon><path d="M2 1h9v3H9v4h3v3H1V8h3V4H2zM6 11v6" fill="#f5a56a" stroke="#c4501b"/></CursorIcon>],
    ['按面选择图元', () => <CursorIcon><path d="M2 4l8-3v12l-8 3z" fill={L} stroke={B}/></CursorIcon>],
    ['选择时拖曳图元', () => <CursorIcon><path d="M1 5h9M5.500 1v9M4 2.500L5.500 1 7 2.500M4 8.500L5.500 10 7 8.500M2.500 3.500L1 5l1.500 1.500M8.500 3.500L10 5 8.500 6.500" stroke="#111" strokeWidth="1.200"/></CursorIcon>],
    ['后台进程', () => <Icon w={17} stroke="#a3a3a3" sw={3}><circle cx="8.500" cy="8.500" r="5.500" strokeDasharray="3 1.300"/></Icon>]
]

const App = () => {
    return (
        <Window>
            <GlobalStyle/>
            <TitleBar>
                <Toolbar>
                    {quickTools.map(([name, w, Pic, active], i) => Pic
                        ? <QuickButton key={i} $w={w} $active={active} aria-label={name}><Pic/></QuickButton>
                        : <Split key={i} $w={w}/>
                    )}
                </Toolbar>
                <Title><AppName>Autodesk Revit 2018 -</AppName><span>{'L型剖面标记族.rfa - 图纸:  -'}</span></Title>
                <Toolbar $gap={15}>
                    <QuickButton $w={12} aria-label="展开搜索"><Icon w={4} h={8} stroke="none"><path d="M0 0l4 4-4 4z" fill={D}/></Icon></QuickButton>
                    <SearchInput aria-label="搜索" placeholder="键入关键字或短语"/>
                    {accountTools.map(([name, w, Pic], i) => Pic
                        ? <QuickButton key={i} $w={w} $left={name === '登录'} aria-label={name}><Pic/></QuickButton>
                        : <Split key={i} $w={w}/>
                    )}
                </Toolbar>
                <WindowButton aria-label="最小化"><Icon w={9} h={12} sw={2} stroke="#222"><path d="M0 11h9"/></Icon></WindowButton>
                <WindowButton aria-label="还原"><Icon w={13} h={12} sw={1.300} stroke="#222"><path d="M4 4V1h8v6H9M1 5h8v6H1zM4 2h8M1 6h8"/></Icon></WindowButton>
                <WindowButton aria-label="关闭"><Cross s={12} sw={2.200} c="#222"/></WindowButton>
            </TitleBar>

            <Tabs>
                <Tab $file>文件</Tab>
                {tabs.map(name => <Tab key={name}>{name}</Tab>)}
                <Tab $active>修改 | 放置尺寸标注</Tab>
                <Tab aria-label="最小化功能区">
                    <Icon w={42} h={12} sw={1.200}><rect x="11" y="1" width="15" height="9" rx="3" fill="#eee"/><path d="M16 7h5l-2.500-3zM32 4h6l-3 4z" fill={D} stroke="none"/></Icon>
                </Tab>
            </Tabs>

            <RibbonBar/>

            <OptionsBar>
                <OptionsTitle>修改 | 放置尺寸标注</OptionsTitle>
                <SelectBox $w={102} $h={22} $bg="#e3e3e3" $line="#c9c9c9">
                    <select aria-label="参照"><option>参照墙中心线</option></select>
                    <Chevron/>
                </SelectBox>
            </OptionsBar>

            <Workspace>
                <Dock $w={220} $gap={4}>
                    <DockTitle>属性<button aria-label="关闭属性"><Cross s={8}/></button></DockTitle>
                    <DockBody>
                        <TypeSelector>
                            <Preview/>
                            <TypeText>线性尺寸标注样式<br/>线性</TypeText>
                            <Caret/>
                        </TypeSelector>
                        <TypeRow>
                            <SelectBox $w={133} $h={25} $bg="#c9c9c9" $line="#c9c9c9">
                                <select aria-label="属性过滤器" disabled><option>放置尺寸标注</option></select>
                                <Chevron c="#a2a2a2"/>
                            </SelectBox>
                            <TextButton>
                                <svg width="17" height="17" viewBox="0 0 32 32" fill="none" aria-hidden="true"><Cubes/><PropSheet x={17} y={12} k={0.66}/></svg>
                                编辑类型
                            </TextButton>
                        </TypeRow>
                        <PropsFooter>
                            <a href="#help">属性帮助</a>
                            <ApplyButton disabled>应用</ApplyButton>
                        </PropsFooter>
                    </DockBody>
                </Dock>

                <Dock $w={230} $gap={5}>
                    <DockTitle>项目浏览器 - L型剖面标记族.rfa<button aria-label="关闭项目浏览器"><Cross s={8}/></button></DockTitle>
                    <DockBody>
                        <Tree>
                            {browser.map(([name, Pic, plus], i) => (
                                <TreeItem key={name} $selected={i === 0}>
                                    <TreeLines plus={plus} first={i === 0} last={i === browser.length - 1}/>
                                    <Pic/>
                                    <span>{name}</span>
                                </TreeItem>
                            ))}
                        </Tree>
                    </DockBody>
                </Dock>

                <View>
                    <Canvas>
                        <Drawing/>
                        <IsolateTag>临时隐藏/隔离</IsolateTag>
                        <ViewButtons>
                            <button aria-label="最小化视图"><Icon w={13} h={14} sw={1}><path d="M1 10.500h11v3H1z" fill="#fff"/></Icon></button>
                            <button aria-label="还原视图"><Icon w={12} h={14} sw={1.200} fill="#eee"><path d="M4 1h7v9H4zM1 4h7v9H1zM3.500 7h2v3h-2z"/></Icon></button>
                            <button aria-label="关闭视图"><Icon w={11} h={14} sw={1} fill="#fff"><path d="M1 3h3l1.500 2L7 3h3L7.500 7.500 10 12H7L5.500 10 4 12H1l2.500-4.500z"/></Icon></button>
                        </ViewButtons>
                        <Watermark><Elephant/>TUITUISOFT</Watermark>
                    </Canvas>
                    <VScroll>
                        <Chevron d="M1 5l3-4 3 4" w={8} h={6}/>
                        <Thumb/>
                        <Chevron d="M1 1l3 4 3-4" w={8} h={6}/>
                    </VScroll>
                    <HScroll>
                        <button aria-label="视觉样式"><Icon w={16} h={13} sw={1.200}><path d="M1 1h14v11H1z" fill="#cfe6f6"/><path d="M3 5l4 2 5-4 2 3-6 6-4-2z" fill="#50545e"/></Icon></button>
                        <button aria-label="临时隐藏/隔离"><Icon w={17} h={13} sw={1.200}><path d="M2 1h9v7H2zM0 11h12" fill="#fff"/><path d="M12 5q0-3 2-3t2 3q0 2-1 3v3h-2V8q-1-1-1-3z" stroke={B} fill="#e6f5ff"/></Icon></button>
                        <Chevron d="M7 1L4 5l3 4" w={18} h={10}/>
                        <Track><Thumb/></Track>
                        <Chevron d="M1 1l3 4-3 4" w={6} h={10} c="#aaa"/>
                    </HScroll>
                    <span/>
                </View>
            </Workspace>

            <StatusBar>
                <span>选择参照，然后单击空白空间放置尺寸标注。</span>
                <StatusTools>
                    {statusTools.map(([name, Pic]) => <StatusButton key={name} aria-label={name}><Pic/></StatusButton>)}
                    <StatusButton aria-label="过滤器">
                        <Icon w={17} h={16} sw={1.200}><path d="M1 1h15v2l-6 6v6H7V9L1 3z" fill="#a9acb3"/></Icon>:0
                    </StatusButton>
                </StatusTools>
            </StatusBar>

            <KeyHint>Tab</KeyHint>
            <Frame>
                <Corner $v="top" $h="left"/>
                <Corner $v="top" $h="right"/>
                <Corner $v="bottom" $h="left"/>
                <Corner $v="bottom" $h="right"/>
                <Handle/>
            </Frame>
        </Window>
    )
}

export default App
